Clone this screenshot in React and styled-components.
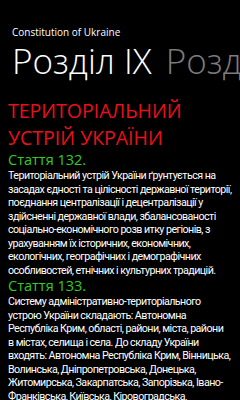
import React from "react";
import styled, { createGlobalStyle } from "styled-components";

const GlobalStyle = createGlobalStyle`
  html, body {
    margin: 0;
    padding: 0;
    background: #000;
  }
  body {
    font-family: "Open Sans", "Noto Sans", sans-serif;
    color: #fff;
  }
`;

const Screen = styled.div`
  width: 240px;
  height: 400px;
  overflow: hidden;
  background: #000;
`;

const AppTitle = styled.div`
  padding: 25px 0 0 12px;
  font-size: 10px;
  line-height: 14px;
  color: #fff;
`;

const PivotRow = styled.div`
  display: flex;
  gap: 14px;
  margin-top: 2px;
  padding-left: 12px;
  white-space: nowrap;
  overflow: hidden;
`;

const PivotItem = styled.span`
  font-size: 35px;
  font-weight: 300;
  line-height: 40px;
  color: ${(p) => (p.active ? "#fff" : "#7c7c7c")};
`;

const Content = styled.div`
  padding: 16px 0 0 8px;
`;

const ChapterTitle = styled.h1`
  margin: 0;
  font-size: 19.5px;
  font-weight: 400;
  line-height: 27px;
  color: #e8101a;
  white-space: pre-line;
`;

const ArticleTitle = styled.h2`
  margin: 0;
  font-size: 14.5px;
  font-weight: 400;
  line-height: 18px;
  color: #33cc22;
`;

const ArticleText = styled.p`
  margin: 0;
  font-family: Roboto, "Open Sans", sans-serif;
  font-size: 10.7px;
  line-height: 13.5px;
  letter-spacing: -0.55px;
  color: #fff;
  white-space: pre;
`;

const articles = [
  {
    title: "Стаття 132.",
    text: [
      "Територіальний устрій України ґрунтується на",
      "засадах єдності та цілісності державної території,",
      "поєднання централізації і децентралізації у",
      "здійсненні державної влади, збалансованості",
      "соціально-економічного розв итку регіонів, з",
      "урахуванням їх історичних, економічних,",
      "екологічних, географічних і демографічних",
      "особливостей, етнічних і культурних традицій.",
    ],
  },
  {
    title: "Стаття 133.",
    text: [
      "Систему адміністративно-територіального",
      "устрою України складають: Автономна",
      "Республіка Крим, області, райони, міста, райони",
      "в містах, селища і села. До складу України",
      "входять: Автономна Республіка Крим, Вінницька,",
      "Волинська, Дніпропетровська, Донецька,",
      "Житомирська, Закарпатська, Запорізька, Івано-",
      "Франківська, Київська, Кіровоградська,",
    ],
  },
];

export default function App() {
  return (
    <Screen>
      <GlobalStyle />
      <AppTitle>Constitution of Ukraine</AppTitle>
      <PivotRow>
        <PivotItem active>Розділ IX</PivotItem>
        <PivotItem>Розділ X</PivotItem>
      </PivotRow>
      <Content>
        <ChapterTitle>{"ТЕРИТОРІАЛЬНИЙ\nУСТРІЙ УКРАЇНИ"}</ChapterTitle>
        {articles.map((a) => (
          <React.Fragment key={a.title}>
            <ArticleTitle>{a.title}</ArticleTitle>
            <ArticleText>{a.text.join("\n")}</ArticleText>
          </React.Fragment>
        ))}
      </Content>
    </Screen>
  );
}
